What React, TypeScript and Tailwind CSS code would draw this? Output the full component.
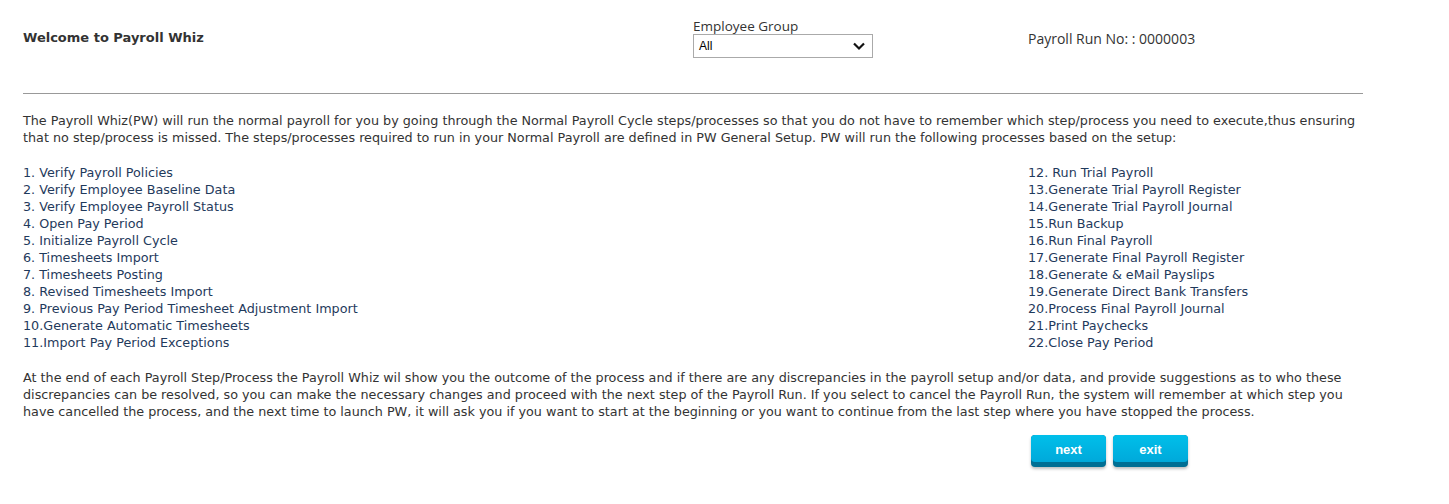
import React from 'react';

const leftSteps = [
  '1. Verify Payroll Policies',
  '2. Verify Employee Baseline Data',
  '3. Verify Employee Payroll Status',
  '4. Open Pay Period',
  '5. Initialize Payroll Cycle',
  '6. Timesheets Import',
  '7. Timesheets Posting',
  '8. Revised Timesheets Import',
  '9. Previous Pay Period Timesheet Adjustment Import',
  '10.Generate Automatic Timesheets',
  '11.Import Pay Period Exceptions',
];

const rightSteps = [
  '12. Run Trial Payroll',
  '13.Generate Trial Payroll Register',
  '14.Generate Trial Payroll Journal',
  '15.Run Backup',
  '16.Run Final Payroll',
  '17.Generate Final Payroll Register',
  '18.Generate & eMail Payslips',
  '19.Generate Direct Bank Transfers',
  '20.Process Final Payroll Journal',
  '21.Print Paychecks',
  '22.Close Pay Period',
];

const WizButton: React.FC<{ label: string }> = ({ label }) => (
  <button className="w-[75px] h-[32px] rounded-[4px] bg-[#006f94] pb-[5px] shadow-[0_2px_3px_rgba(0,0,0,0.25)] cursor-pointer">
    <span className="flex h-full items-center justify-center pt-[3px] rounded-[4px] bg-gradient-to-b from-[#00bfea] to-[#00a9da] text-[13px] font-bold text-white font-['Liberation_Sans',Arial,sans-serif]">
      {label}
    </span>
  </button>
);

export default function App() {
  return (
    <div className="min-h-screen bg-white">
      <div className="w-[1340px] ml-[23px] pt-[18px] font-['DejaVu_Sans',Tahoma,sans-serif]">
        {/* header row */}
        <div className="grid grid-cols-[670px_335px_335px] h-[40px] items-center">
          <h1 className="text-[13px] font-bold text-[#333]">Welcome to Payroll Whiz</h1>
          <div className="flex flex-col font-['Open_Sans',sans-serif] text-[13.5px] text-[#333]">
            <label className="leading-[16px]">Employee Group</label>
            <div className="flex w-[180px] h-[24px] items-center justify-between border border-[#aaa] pl-[5px] pr-[6px]">
              <span className="text-[12px] text-black font-['Liberation_Sans',Arial,sans-serif]">All</span>
              <svg width="14" height="10" viewBox="0 0 14 10" fill="none">
                <path d="M2 2.5 L7 7.5 L12 2.5" stroke="#111" strokeWidth="2.2" />
              </svg>
            </div>
          </div>
          <div className="font-['Open_Sans',sans-serif] text-[14px] text-[#333]">Payroll Run No: : 0000003</div>
        </div>

        <hr className="mt-[35px] border-0 border-t border-[#999]" />

        {/* intro */}
        <p className="mt-[18px] text-[12.75px] leading-[17px] text-[#333]">
          The Payroll Whiz(PW) will run the normal payroll for you by going through the Normal Payroll Cycle steps/processes so that you do not have to remember which step/process you need to execute,thus ensuring that no step/process is missed. The steps/processes required to run in your Normal Payroll are defined in PW General Setup. PW will run the following processes based on the setup:
        </p>

        {/* steps */}
        <div className="mt-[18px] grid grid-cols-[1005px_335px] text-[12.75px] leading-[17px] text-[#1f3a5c]">
          <ul>
            {leftSteps.map((s) => (
              <li key={s}>{s}</li>
            ))}
          </ul>
          <ul>
            {rightSteps.map((s) => (
              <li key={s}>{s}</li>
            ))}
          </ul>
        </div>

        <p className="mt-[18px] text-[12.75px] leading-[17px] text-[#333]">
          At the end of each Payroll Step/Process the Payroll Whiz wil show you the outcome of the process and if there are any discrepancies in the payroll setup and/or data, and provide suggestions as to who these discrepancies can be resolved, so you can make the necessary changes and proceed with the next step of the Payroll Run. If you select to cancel the Payroll Run, the system will remember at which step you have cancelled the process, and the next time to launch PW, it will ask you if you want to start at the beginning or you want to continue from the last step where you have stopped the process.
        </p>

        <div className="mt-[15px] ml-[1008px] flex gap-[7px]">
          <WizButton label="next" />
          <WizButton label="exit" />
        </div>
      </div>
    </div>
  );
}
